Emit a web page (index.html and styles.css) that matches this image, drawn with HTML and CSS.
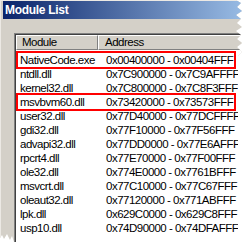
FILE: index.html
```html
<!DOCTYPE html>
<html lang="en">
<head>
	<meta charset="UTF-8">
	<title>Module List</title>
	<link rel="stylesheet" href="styles.css">
</head>
<body>
	<div class="window">
		<div class="titlebar">Module List</div>

		<div class="client">
			<div class="listview">
				<div class="header">
					<div class="col_module">Module</div>
					<div class="col_address">Address</div>
				</div>

				<div class="rows">
					<div class="row marked"><span class="name">NativeCode.exe</span><span class="addr">0x00400000 - 0x00404FFF</span></div>
					<div class="row"><span class="name">ntdll.dll</span><span class="addr">0x7C900000 - 0x7C9AFFFF</span></div>
					<div class="row"><span class="name">kernel32.dll</span><span class="addr">0x7C800000 - 0x7C8F3FFF</span></div>
					<div class="row marked"><span class="name">msvbvm60.dll</span><span class="addr">0x73420000 - 0x73573FFF</span></div>
					<div class="row"><span class="name">user32.dll</span><span class="addr">0x77D40000 - 0x77DCFFFF</span></div>
					<div class="row"><span class="name">gdi32.dll</span><span class="addr">0x77F10000 - 0x77F56FFF</span></div>
					<div class="row"><span class="name">advapi32.dll</span><span class="addr">0x77DD0000 - 0x77E6AFFF</span></div>
					<div class="row"><span class="name">rpcrt4.dll</span><span class="addr">0x77E70000 - 0x77F00FFF</span></div>
					<div class="row"><span class="name">ole32.dll</span><span class="addr">0x774E0000 - 0x7761BFFF</span></div>
					<div class="row"><span class="name">msvcrt.dll</span><span class="addr">0x77C10000 - 0x77C67FFF</span></div>
					<div class="row"><span class="name">oleaut32.dll</span><span class="addr">0x77120000 - 0x771ABFFF</span></div>
					<div class="row"><span class="name">lpk.dll</span><span class="addr">0x629C0000 - 0x629C8FFF</span></div>
					<div class="row"><span class="name">usp10.dll</span><span class="addr">0x74D90000 - 0x74DFAFFF</span></div>
				</div>
			</div>
		</div>
	</div>
</body>
</html>
```

FILE: styles.css
```css
html, body{
	margin: 0;
	background-color: white;
}
body{
	width: 243px;
	height: 242px;
	overflow: hidden;
	font-family: "Liberation Sans", Arial, sans-serif;
	font-size: 11.5px;
}
.window{
	width: 243px;
	height: 242px;
	box-sizing: border-box;
	padding: 1px 0 0 3px;
	overflow: hidden;
	background-color: #d4d0c8;
	box-shadow: inset 1px 1px 0 #ece9e4;
	/* torn screenshot edges */
	clip-path: polygon(0 0, 236px 0, 241px 3px, 237px 7px, 242px 11px, 236px 15px, 241px 19px, 237px 23px, 242px 27px, 236px 31px, 241px 35px, 237px 39px, 242px 43px, 237px 47px, 242px 52px, 238px 56px, 238px 242px, 14px 242px, 12px 236px, 10px 240px, 7px 234px, 4px 239px, 2px 235px, 0 238px);
}
.titlebar{
	height: 18px;
	box-sizing: border-box;
	padding: 2px 0 0 2px;
	line-height: 15px;
	font-size: 12px;
	font-weight: bold;
	letter-spacing: -0.3px;
	color: white;
	background: linear-gradient(to right, #0a246a, #a6caf0 110%);
}
.client{
	padding: 14px 0 0 11px;
}
.listview{
	width: 227px;
	height: 207px;
	overflow: hidden;
	border-top: solid 1px #808080;
	border-left: solid 1px #808080;
	box-shadow: inset 1px 1px 0 #404040;
	padding: 1px 0 0 1px;
	background-color: white;
}
.header{
	display: flex;
	height: 15px;
	background-color: #d4d0c8;
	letter-spacing: -0.5px;
}
.header div{
	box-sizing: border-box;
	border-top: solid 1px white;
	border-left: solid 1px white;
	border-right: solid 1px #808080;
	border-bottom: solid 1px #808080;
	line-height: 13px;
}
.col_module{
	width: 82px;
	padding-left: 5px;
}
.col_address{
	flex: 1;
	padding-left: 6px;
}
.rows{
	padding-top: 3px;
}
.row{
	position: relative;
	display: flex;
	height: 14px;
	line-height: 14px;
	letter-spacing: -0.5px;
	color: black;
}
.row .name{
	width: 78px;
	padding-left: 4px;
}
.row .addr{
	padding-left: 8px;
	white-space: nowrap;
}
.row.marked::after{
	content: "";
	position: absolute;
	left: 0;
	top: -2px;
	width: 216px;
	height: 14px;
	border: solid 2px red;
}
```
